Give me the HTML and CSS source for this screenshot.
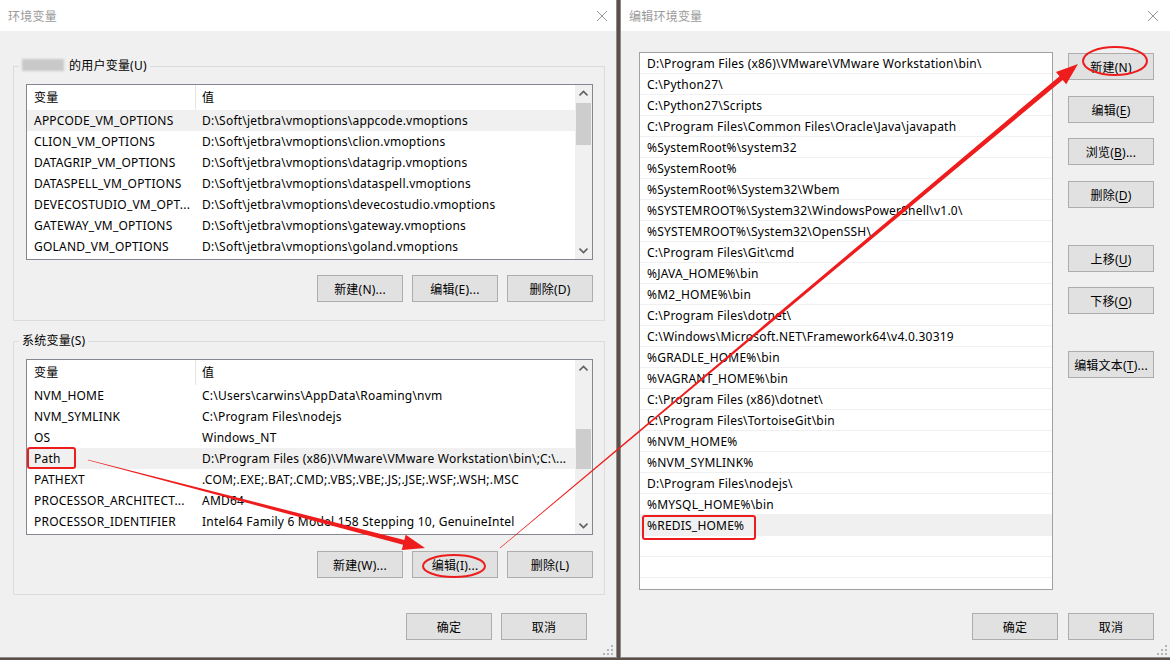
FILE: index.html
```html
<!DOCTYPE html>
<html lang="zh-CN">
<head>
    <meta charset="UTF-8">
    <title>环境变量</title>
    <link rel="stylesheet" href="styles.css">
</head>
<body>
    <!-- 环境变量 -->
    <div class="window win-env">
        <div class="titlebar">
            <span class="title">环境变量</span>
            <svg class="close" width="10" height="10" viewBox="0 0 10 10"><path d="M0 0L10 10M10 0L0 10"/></svg>
        </div>
        <div class="win-body">
            <fieldset class="group user">
                <legend><span class="blur"></span>的用户变量(U)</legend>
                <div class="table">
                    <div class="grid">
                        <div class="row head"><span>变量</span><span>值</span></div>
                        <div class="row sel"><span>APPCODE_VM_OPTIONS</span><span>D:\Soft\jetbra\vmoptions\appcode.vmoptions</span></div>
                        <div class="row"><span>CLION_VM_OPTIONS</span><span>D:\Soft\jetbra\vmoptions\clion.vmoptions</span></div>
                        <div class="row"><span>DATAGRIP_VM_OPTIONS</span><span>D:\Soft\jetbra\vmoptions\datagrip.vmoptions</span></div>
                        <div class="row"><span>DATASPELL_VM_OPTIONS</span><span>D:\Soft\jetbra\vmoptions\dataspell.vmoptions</span></div>
                        <div class="row"><span>DEVECOSTUDIO_VM_OPT...</span><span>D:\Soft\jetbra\vmoptions\devecostudio.vmoptions</span></div>
                        <div class="row"><span>GATEWAY_VM_OPTIONS</span><span>D:\Soft\jetbra\vmoptions\gateway.vmoptions</span></div>
                        <div class="row"><span>GOLAND_VM_OPTIONS</span><span>D:\Soft\jetbra\vmoptions\goland.vmoptions</span></div>
                    </div>
                    <div class="scrollbar">
                        <svg class="arrow" width="9" height="17" viewBox="0 0 9 17"><path d="M0.5 10.5L4.5 6.5L8.5 10.5"/></svg>
                        <div class="track"><div class="thumb" style="margin-top:1px;height:42px"></div></div>
                        <svg class="arrow" width="9" height="17" viewBox="0 0 9 17"><path d="M0.5 6.5L4.5 10.5L8.5 6.5"/></svg>
                    </div>
                </div>
                <div class="btn-row">
                    <button class="btn">新建(N)...</button>
                    <button class="btn">编辑(E)...</button>
                    <button class="btn">删除(D)</button>
                </div>
            </fieldset>

            <fieldset class="group sys">
                <legend>系统变量(S)</legend>
                <div class="table">
                    <div class="grid">
                        <div class="row head"><span>变量</span><span>值</span></div>
                        <div class="row"><span>NVM_HOME</span><span>C:\Users\carwins\AppData\Roaming\nvm</span></div>
                        <div class="row"><span>NVM_SYMLINK</span><span>C:\Program Files\nodejs</span></div>
                        <div class="row"><span>OS</span><span>Windows_NT</span></div>
                        <div class="row sel"><span>Path</span><span>D:\Program Files (x86)\VMware\VMware Workstation\bin\;C:\...</span></div>
                        <div class="row"><span>PATHEXT</span><span>.COM;.EXE;.BAT;.CMD;.VBS;.VBE;.JS;.JSE;.WSF;.WSH;.MSC</span></div>
                        <div class="row"><span>PROCESSOR_ARCHITECT...</span><span>AMD64</span></div>
                        <div class="row"><span>PROCESSOR_IDENTIFIER</span><span>Intel64 Family 6 Model 158 Stepping 10, GenuineIntel</span></div>
                    </div>
                    <div class="scrollbar">
                        <svg class="arrow" width="9" height="17" viewBox="0 0 9 17"><path d="M0.5 10.5L4.5 6.5L8.5 10.5"/></svg>
                        <div class="track"><div class="thumb" style="margin-top:52px;height:40px"></div></div>
                        <svg class="arrow" width="9" height="17" viewBox="0 0 9 17"><path d="M0.5 6.5L4.5 10.5L8.5 6.5"/></svg>
                    </div>
                </div>
                <div class="btn-row">
                    <button class="btn">新建(W)...</button>
                    <button class="btn">编辑(I)...</button>
                    <button class="btn">删除(L)</button>
                </div>
            </fieldset>

            <div class="footer">
                <button class="btn">确定</button>
                <button class="btn">取消</button>
            </div>
        </div>
        <svg class="grip" width="11" height="11" viewBox="0 0 11 11">
            <rect x="8" y="0" width="2" height="2"/>
            <rect x="4" y="4" width="2" height="2"/><rect x="8" y="4" width="2" height="2"/>
            <rect x="0" y="8" width="2" height="2"/><rect x="4" y="8" width="2" height="2"/><rect x="8" y="8" width="2" height="2"/>
        </svg>
    </div>

    <!-- 编辑环境变量 -->
    <div class="window win-edit">
        <div class="titlebar">
            <span class="title">编辑环境变量</span>
            <svg class="close" width="10" height="10" viewBox="0 0 10 10"><path d="M0 0L10 10M10 0L0 10"/></svg>
        </div>
        <div class="edit-body">
            <div class="list">
                <div class="item">D:\Program Files (x86)\VMware\VMware Workstation\bin\</div>
                <div class="item">C:\Python27\</div>
                <div class="item">C:\Python27\Scripts</div>
                <div class="item">C:\Program Files\Common Files\Oracle\Java\javapath</div>
                <div class="item">%SystemRoot%\system32</div>
                <div class="item">%SystemRoot%</div>
                <div class="item">%SystemRoot%\System32\Wbem</div>
                <div class="item">%SYSTEMROOT%\System32\WindowsPowerShell\v1.0\</div>
                <div class="item">%SYSTEMROOT%\System32\OpenSSH\</div>
                <div class="item">C:\Program Files\Git\cmd</div>
                <div class="item">%JAVA_HOME%\bin</div>
                <div class="item">%M2_HOME%\bin</div>
                <div class="item">C:\Program Files\dotnet\</div>
                <div class="item">C:\Windows\Microsoft.NET\Framework64\v4.0.30319</div>
                <div class="item">%GRADLE_HOME%\bin</div>
                <div class="item">%VAGRANT_HOME%\bin</div>
                <div class="item">C:\Program Files (x86)\dotnet\</div>
                <div class="item">C:\Program Files\TortoiseGit\bin</div>
                <div class="item">%NVM_HOME%</div>
                <div class="item">%NVM_SYMLINK%</div>
                <div class="item">D:\Program Files\nodejs\</div>
                <div class="item">%MYSQL_HOME%\bin</div>
                <div class="item sel">%REDIS_HOME%</div>
                <div class="item"></div>
                <div class="item"></div>
                <div class="item"></div>
            </div>
            <div class="btn-col">
                <button class="btn">新建(<u>N</u>)</button>
                <button class="btn">编辑(<u>E</u>)</button>
                <button class="btn near">浏览(<u>B</u>)...</button>
                <button class="btn">删除(<u>D</u>)</button>
                <button class="btn sep">上移(<u>U</u>)</button>
                <button class="btn near">下移(<u>O</u>)</button>
                <button class="btn sep">编辑文本(<u>T</u>)...</button>
            </div>
            <div class="footer edit-footer">
                <button class="btn">确定</button>
                <button class="btn">取消</button>
            </div>
        </div>
        <svg class="grip" width="11" height="11" viewBox="0 0 11 11">
            <rect x="8" y="0" width="2" height="2"/>
            <rect x="4" y="4" width="2" height="2"/><rect x="8" y="4" width="2" height="2"/>
            <rect x="0" y="8" width="2" height="2"/><rect x="4" y="8" width="2" height="2"/><rect x="8" y="8" width="2" height="2"/>
        </svg>
    </div>

    <!-- 标注 -->
    <svg class="marks" width="1170" height="660" viewBox="0 0 1170 660">
        <rect class="mark-box" x="28" y="448" width="47" height="20" rx="2"/>
        <rect class="mark-box" x="643" y="516" width="112" height="23" rx="2"/>
        <ellipse class="mark-box" cx="454" cy="566" rx="31" ry="11"/>
        <ellipse class="mark-box" cx="1115" cy="61" rx="32" ry="14"/>
        <polygon class="mark-arrow" points="88.1,459.7 404.3,540.0 405.7,534.7 425,548 401.7,550.1 403.1,544.8 87.9,460.3"/>
        <polygon class="mark-arrow" points="499.8,547.8 1059.5,76.2 1056.0,72.0 1078,64 1066.2,84.2 1062.7,80.0 500.2,548.2"/>
    </svg>
</body>
</html>
```

FILE: styles.css
```css
body {
    margin: 0;
    width: 1170px;
    height: 660px;
    overflow: hidden;
    position: relative;
    display: flex;
    gap: 3px;
    background: #5a4f49;
    font-family: "Noto Sans", "Noto Sans CJK SC", sans-serif;
    font-size: 12px;
    letter-spacing: 0.22px;
    color: #000;
}

.window {
    position: relative;
    height: 657px;
    background: #f0f0f0;
    border-bottom: 1px solid #8c8c8c;
    display: flex;
    flex-direction: column;
}

.win-env {
    width: 616px;
    border-right: 1px solid #8c8c8c;
}

.win-edit {
    flex: 1;
    border-left: 1px solid #8c8c8c;
}

.titlebar {
    height: 31px;
    background: #fff;
    display: flex;
    align-items: center;
    justify-content: space-between;
    padding: 0 9px 0 8px;
    flex-shrink: 0;
}

.win-edit .titlebar {
    padding-right: 12px;
}

.title {
    color: #9a9a9a;
}

.close path {
    stroke: #999;
    stroke-width: 1;
    fill: none;
}

.grip {
    position: absolute;
    right: 2px;
    bottom: 1px;
    fill: #b4b4b4;
}

/* 左边窗口 */
.win-body {
    padding: 0 0 0 13px;
}

.group {
    box-sizing: border-box;
    width: 592px;
    margin: 27px 0 0;
    padding: 10px 11px 16px 12px;
    border: 1px solid #dcdcdc;
    min-inline-size: 0;
}

.group.user {
    padding-bottom: 18px;
}

.group.user .btn-row {
    margin-top: 15px;
}

.group.sys {
    margin-top: 12px;
}

.group.sys .btn-row {
    margin-top: 16px;
}

.group legend {
    padding: 0 3px;
    margin-left: -7px;
    line-height: 16px;
}

.blur {
    display: inline-block;
    width: 42px;
    height: 12px;
    margin-right: 5px;
    vertical-align: -1px;
    background: #c9c9c9;
    filter: blur(1.2px);
}

.table {
    box-sizing: border-box;
    height: 176px;
    border: 1px solid #828790;
    background: #fff;
    display: flex;
    overflow: hidden;
}

.grid {
    flex: 1;
    min-width: 0;
}

.row {
    display: grid;
    grid-template-columns: 168px 1fr;
    height: 21px;
    line-height: 21px;
    white-space: nowrap;
}

.row span {
    padding-left: 7px;
    overflow: hidden;
}

.row.head {
    height: 25px;
    line-height: 25px;
}

.row.head span + span {
    border-left: 1px solid #e5e5e5;
    padding-left: 6px;
}

.row.sel {
    background: #f0f0f0;
}

.scrollbar {
    width: 17px;
    background: #f0f0f0;
    display: flex;
    flex-direction: column;
    align-items: center;
}

.scrollbar .arrow path {
    stroke: #606060;
    stroke-width: 1.6;
    fill: none;
}

.track {
    flex: 1;
    align-self: stretch;
}

.thumb {
    background: #cdcdcd;
    margin: 0 1px;
}

.btn-row {
    display: flex;
    justify-content: flex-end;
    gap: 9px;
    margin-top: 17px;
}

.btn {
    box-sizing: border-box;
    width: 86px;
    height: 27px;
    padding: 0;
    border: 1px solid #adadad;
    background: #e1e1e1;
    font: inherit;
    letter-spacing: inherit;
    color: #000;
}

.footer {
    display: flex;
    justify-content: flex-end;
    gap: 9px;
    margin-top: 18px;
    padding-right: 29px;
}

/* 右边窗口 */
.edit-body {
    display: grid;
    grid-template-columns: 414px 86px;
    grid-template-rows: 538px auto;
    column-gap: 15px;
    padding: 21px 0 0 18px;
}

.list {
    box-sizing: border-box;
    border: 1px solid #a0a0a0;
    background: #fff;
    overflow: hidden;
}

.item {
    box-sizing: border-box;
    height: 21px;
    padding: 1px 0 0 7px;
    line-height: 20px;
    border-bottom: 1px solid #f0f0f0;
    white-space: nowrap;
}

.item.sel {
    background: #f0f0f0;
}

.btn-col {
    display: flex;
    flex-direction: column;
    padding-top: 1px;
}

.btn-col .btn + .btn {
    margin-top: 16px;
}

.btn-col .btn.near {
    margin-top: 15px;
}

.btn-col .btn.sep {
    margin-top: 37px;
}

.btn u {
    text-decoration-thickness: 1px;
    text-underline-offset: 2px;
}

.edit-footer {
    grid-column: 1 / -1;
    margin-top: 23px;
    padding-right: 0;
    gap: 10px;
}

/* 红色标注 */
.marks {
    position: absolute;
    left: 0;
    top: 0;
    pointer-events: none;
}

.mark-box {
    fill: none;
    stroke: #ee1c1c;
    stroke-width: 2;
}

.mark-arrow {
    fill: #ee1c1c;
}
```
